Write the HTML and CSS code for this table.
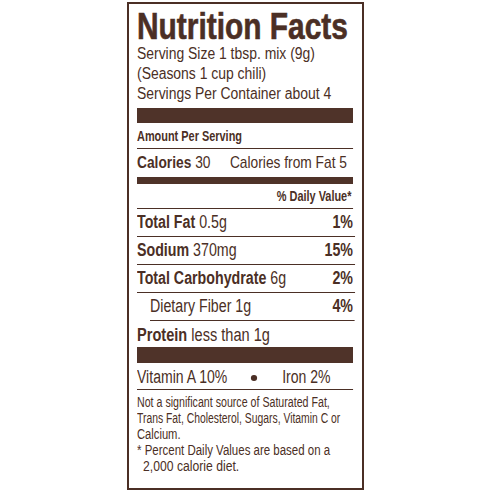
FILE: index.html
```html
<!DOCTYPE html>
<html lang="en">
<head>
    <meta charset="UTF-8">
    <meta name="viewport" content="width=device-width, initial-scale=1.0">
    <title>Nutrition Facts</title>
    <link rel="stylesheet" href="styles.css">
</head>
<body>
    <div class="label">
        <h1 class="narrow title">Nutrition Facts</h1>
        <div class="narrow serving">
            <div>Serving Size 1 tbsp. mix (9g)</div>
            <div>(Seasons 1 cup chili)</div>
            <div>Servings Per Container about 4</div>
        </div>
        <div class="bar bar-big"></div>

        <div class="narrow row small-row amount"><b>Amount Per Serving</b></div>
        <div class="narrow row calories">
            <span><b>Calories</b> 30</span>
            <span>Calories from Fat 5</span>
        </div>
        <div class="bar bar-mid"></div>
        <div class="narrow row small-row daily"><b>% Daily Value*</b></div>

        <!-- nutrients -->
        <div class="narrow row nutrient">
            <span><b>Total Fat</b> 0.5g</span><b>1%</b>
        </div>
        <div class="narrow row nutrient">
            <span><b>Sodium</b> 370mg</span><b>15%</b>
        </div>
        <div class="narrow row nutrient">
            <span><b>Total Carbohydrate</b> 6g</span><b>2%</b>
        </div>
        <div class="narrow row nutrient sub">
            <span>Dietary Fiber 1g</span><b>4%</b>
        </div>
        <div class="narrow row nutrient protein">
            <span><b>Protein</b> less than 1g</span>
        </div>
        <div class="bar bar-big bar-flush"></div>

        <div class="narrow row vitamins">
            <span>Vitamin A 10%</span>
            <span class="dot"></span>
            <span>Iron 2%</span>
        </div>
        <div class="footnote">
            <p class="narrow note-a">Not a significant source of Saturated Fat,</p>
            <p class="narrow note-b">Trans Fat, Cholesterol, Sugars, Vitamin C or</p>
            <p class="narrow note-c">Calcium.</p>
            <p class="narrow note-d">* Percent Daily Values are based on a</p>
            <p class="narrow note-e">2,000 calorie diet.</p>
        </div>
    </div>
</body>
</html>
```
FILE: styles.css
```css
body {
    margin: 0;
    background-color: white;
    font-family: "Liberation Sans", Arial, sans-serif;
    color: #4b2f25;
}
.label {
    box-sizing: border-box;
    width: 237px;
    height: 488px;
    margin: 2px 0 0 127px;
    padding: 6.5px 9px 0 8px;
    border: 2px solid #4b2f25;
}
/* no condensed font installed: squeeze each block horizontally */
.narrow {
    --w: 216px;
    --k: 0.8;
    box-sizing: border-box;
    width: calc(var(--w) / var(--k));
    transform: scaleX(var(--k));
    transform-origin: left top;
    white-space: nowrap;
}
.title {
    --k: 0.83;
    margin: 0 0 1px;
    font-size: 36px;
    line-height: 32px;
    font-weight: bold;
    -webkit-text-stroke: 0.6px #4b2f25;
}
.serving {
    --k: 0.87;
    font-size: 16px;
    line-height: 20px;
}
.bar {
    background-color: #4f3329;
}
.bar-big {
    height: 15px;
    margin-top: 4px;
}
.bar-flush {
    height: 16px;
    margin-top: 0;
}
.bar-mid {
    height: 7px;
}
.row {
    display: flex;
    justify-content: space-between;
    align-items: baseline;
    border-bottom: 1px solid #4b2f25;
    padding-right: 2.5px;
}
.small-row {
    --k: 0.78;
    font-size: 14px;
    line-height: 16px;
}
.amount {
    padding: 5px 0 4px;
}
.daily {
    justify-content: flex-end;
    padding: 4px 2px 4px 0;
}
.calories {
    --k: 0.81;
    font-size: 17px;
    line-height: 28px;
    border-bottom: none;
    padding-right: 7.4px;
}
.nutrient {
    --k: 0.79;
    font-size: 18px;
    line-height: 27px;
    height: 27px;
    box-sizing: content-box;
}
.nutrient.sub {
    --w: 203px;
    margin-left: 13px;
}
.nutrient.protein {
    --k: 0.81;
    border-bottom: none;
    line-height: 26px;
    padding-top: 1px;
    height: 25px;
}
.vitamins {
    --k: 0.78;
    justify-content: flex-start;
    font-size: 18px;
    line-height: 24px;
    padding-top: 2px;
}
.dot {
    display: inline-block;
    width: 7.7px;
    height: 6px;
    border-radius: 50%;
    background-color: #4b2f25;
    margin: 0 32px 0 30.7px;
    position: relative;
    top: -2px;
}
.footnote {
    font-size: 14px;
    line-height: 16.2px;
    padding-top: 4px;
}
.footnote p {
    margin: 0;
}
/* line widths differ in the condensed face, so each line gets its own squeeze */
.note-a {
    --k: 0.76;
}
.note-b {
    --k: 0.74;
}
.note-c {
    --k: 0.8;
}
.note-d {
    --k: 0.82;
}
.note-e {
    --k: 0.87;
    padding-left: 7px;
}
```
